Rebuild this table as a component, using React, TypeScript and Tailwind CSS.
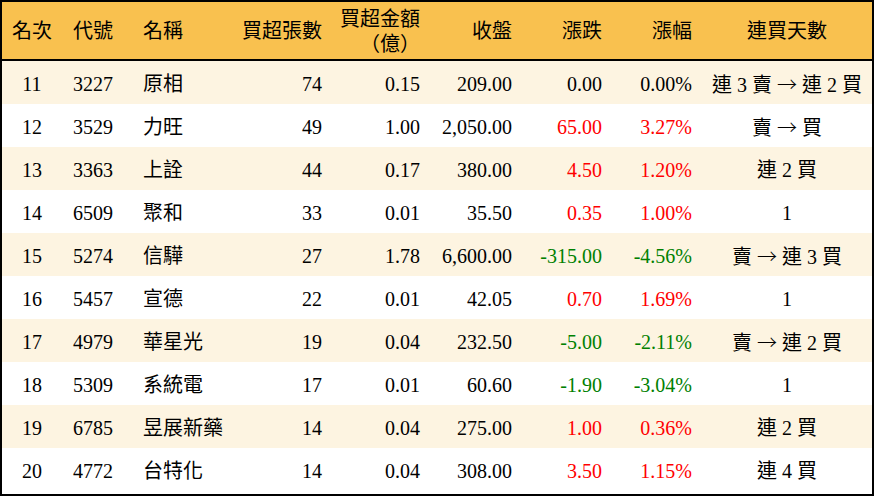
const rows = [
  { rank: 11, code: "3227", name: "原相", lots: 74, amount: "0.15", close: "209.00", chg: "0.00", pct: "0.00%", dir: 0, streak: ["連 3 賣", "連 2 買"] },
  { rank: 12, code: "3529", name: "力旺", lots: 49, amount: "1.00", close: "2,050.00", chg: "65.00", pct: "3.27%", dir: 1, streak: ["賣", "買"] },
  { rank: 13, code: "3363", name: "上詮", lots: 44, amount: "0.17", close: "380.00", chg: "4.50", pct: "1.20%", dir: 1, streak: ["連 2 買"] },
  { rank: 14, code: "6509", name: "聚和", lots: 33, amount: "0.01", close: "35.50", chg: "0.35", pct: "1.00%", dir: 1, streak: ["1"] },
  { rank: 15, code: "5274", name: "信驊", lots: 27, amount: "1.78", close: "6,600.00", chg: "-315.00", pct: "-4.56%", dir: -1, streak: ["賣", "連 3 買"] },
  { rank: 16, code: "5457", name: "宣德", lots: 22, amount: "0.01", close: "42.05", chg: "0.70", pct: "1.69%", dir: 1, streak: ["1"] },
  { rank: 17, code: "4979", name: "華星光", lots: 19, amount: "0.04", close: "232.50", chg: "-5.00", pct: "-2.11%", dir: -1, streak: ["賣", "連 2 買"] },
  { rank: 18, code: "5309", name: "系統電", lots: 17, amount: "0.01", close: "60.60", chg: "-1.90", pct: "-3.04%", dir: -1, streak: ["1"] },
  { rank: 19, code: "6785", name: "昱展新藥", lots: 14, amount: "0.04", close: "275.00", chg: "1.00", pct: "0.36%", dir: 1, streak: ["連 2 買"] },
  { rank: 20, code: "4772", name: "台特化", lots: 14, amount: "0.04", close: "308.00", chg: "3.50", pct: "1.15%", dir: 1, streak: ["連 4 買"] },
];

const cols = "grid grid-cols-[60px_70px_100px_90px_98px_92px_90px_100px_170px]";
const cjk = { fontFamily: '"Noto Sans CJK TC", sans-serif' };

function changeColor(dir: number) {
  if (dir > 0) return "text-[#ff0000]";
  if (dir < 0) return "text-[#008000]";
  return "text-black";
}

function Streak({ parts }: { parts: string[] }) {
  return (
    <div className="text-center whitespace-nowrap">
      {parts.map((p, i) => (
        <span key={i}>
          {i > 0 && (
            <>
              {" "}
              <span style={cjk} className="font-light">→</span>{" "}
            </>
          )}
          {p}
        </span>
      ))}
    </div>
  );
}

export default function App() {
  return (
    <div
      className="w-[874px] h-[496px] bg-white border-2 border-black text-black text-[20px] leading-[22px] overflow-hidden"
      style={{ fontFamily: '"Liberation Serif", "Noto Sans CJK TC", serif' }}
    >
      <div className={`${cols} h-[59px] items-center bg-[#f9c14f] border-b-2 border-black`}>
        <div className="text-center">名次</div>
        <div className="pl-[11px]">代號</div>
        <div className="pl-[11px]">名稱</div>
        <div className="text-right">買超張數</div>
        <div className="text-right leading-[23px] pt-[1px]">
          <div>買超金額</div>
          <div style={cjk}>（億）</div>
        </div>
        <div className="text-right">收盤</div>
        <div className="text-right">漲跌</div>
        <div className="text-right pr-[10px]">漲幅</div>
        <div className="text-center">連買天數</div>
      </div>
      {rows.map((r, i) => (
        <div
          key={r.rank}
          className={`${cols} h-[43px] items-center pt-[3px] ${i % 2 === 0 ? "bg-[#fdf4e1]" : "bg-white"}`}
        >
          <div className="text-center">{r.rank}</div>
          <div className="pl-[11px]">{r.code}</div>
          <div className="pl-[11px] whitespace-nowrap">{r.name}</div>
          <div className="text-right">{r.lots}</div>
          <div className="text-right">{r.amount}</div>
          <div className="text-right">{r.close}</div>
          <div className={`text-right ${changeColor(r.dir)}`}>{r.chg}</div>
          <div className={`text-right pr-[10px] ${changeColor(r.dir)}`}>{r.pct}</div>
          <Streak parts={r.streak} />
        </div>
      ))}
    </div>
  );
}
